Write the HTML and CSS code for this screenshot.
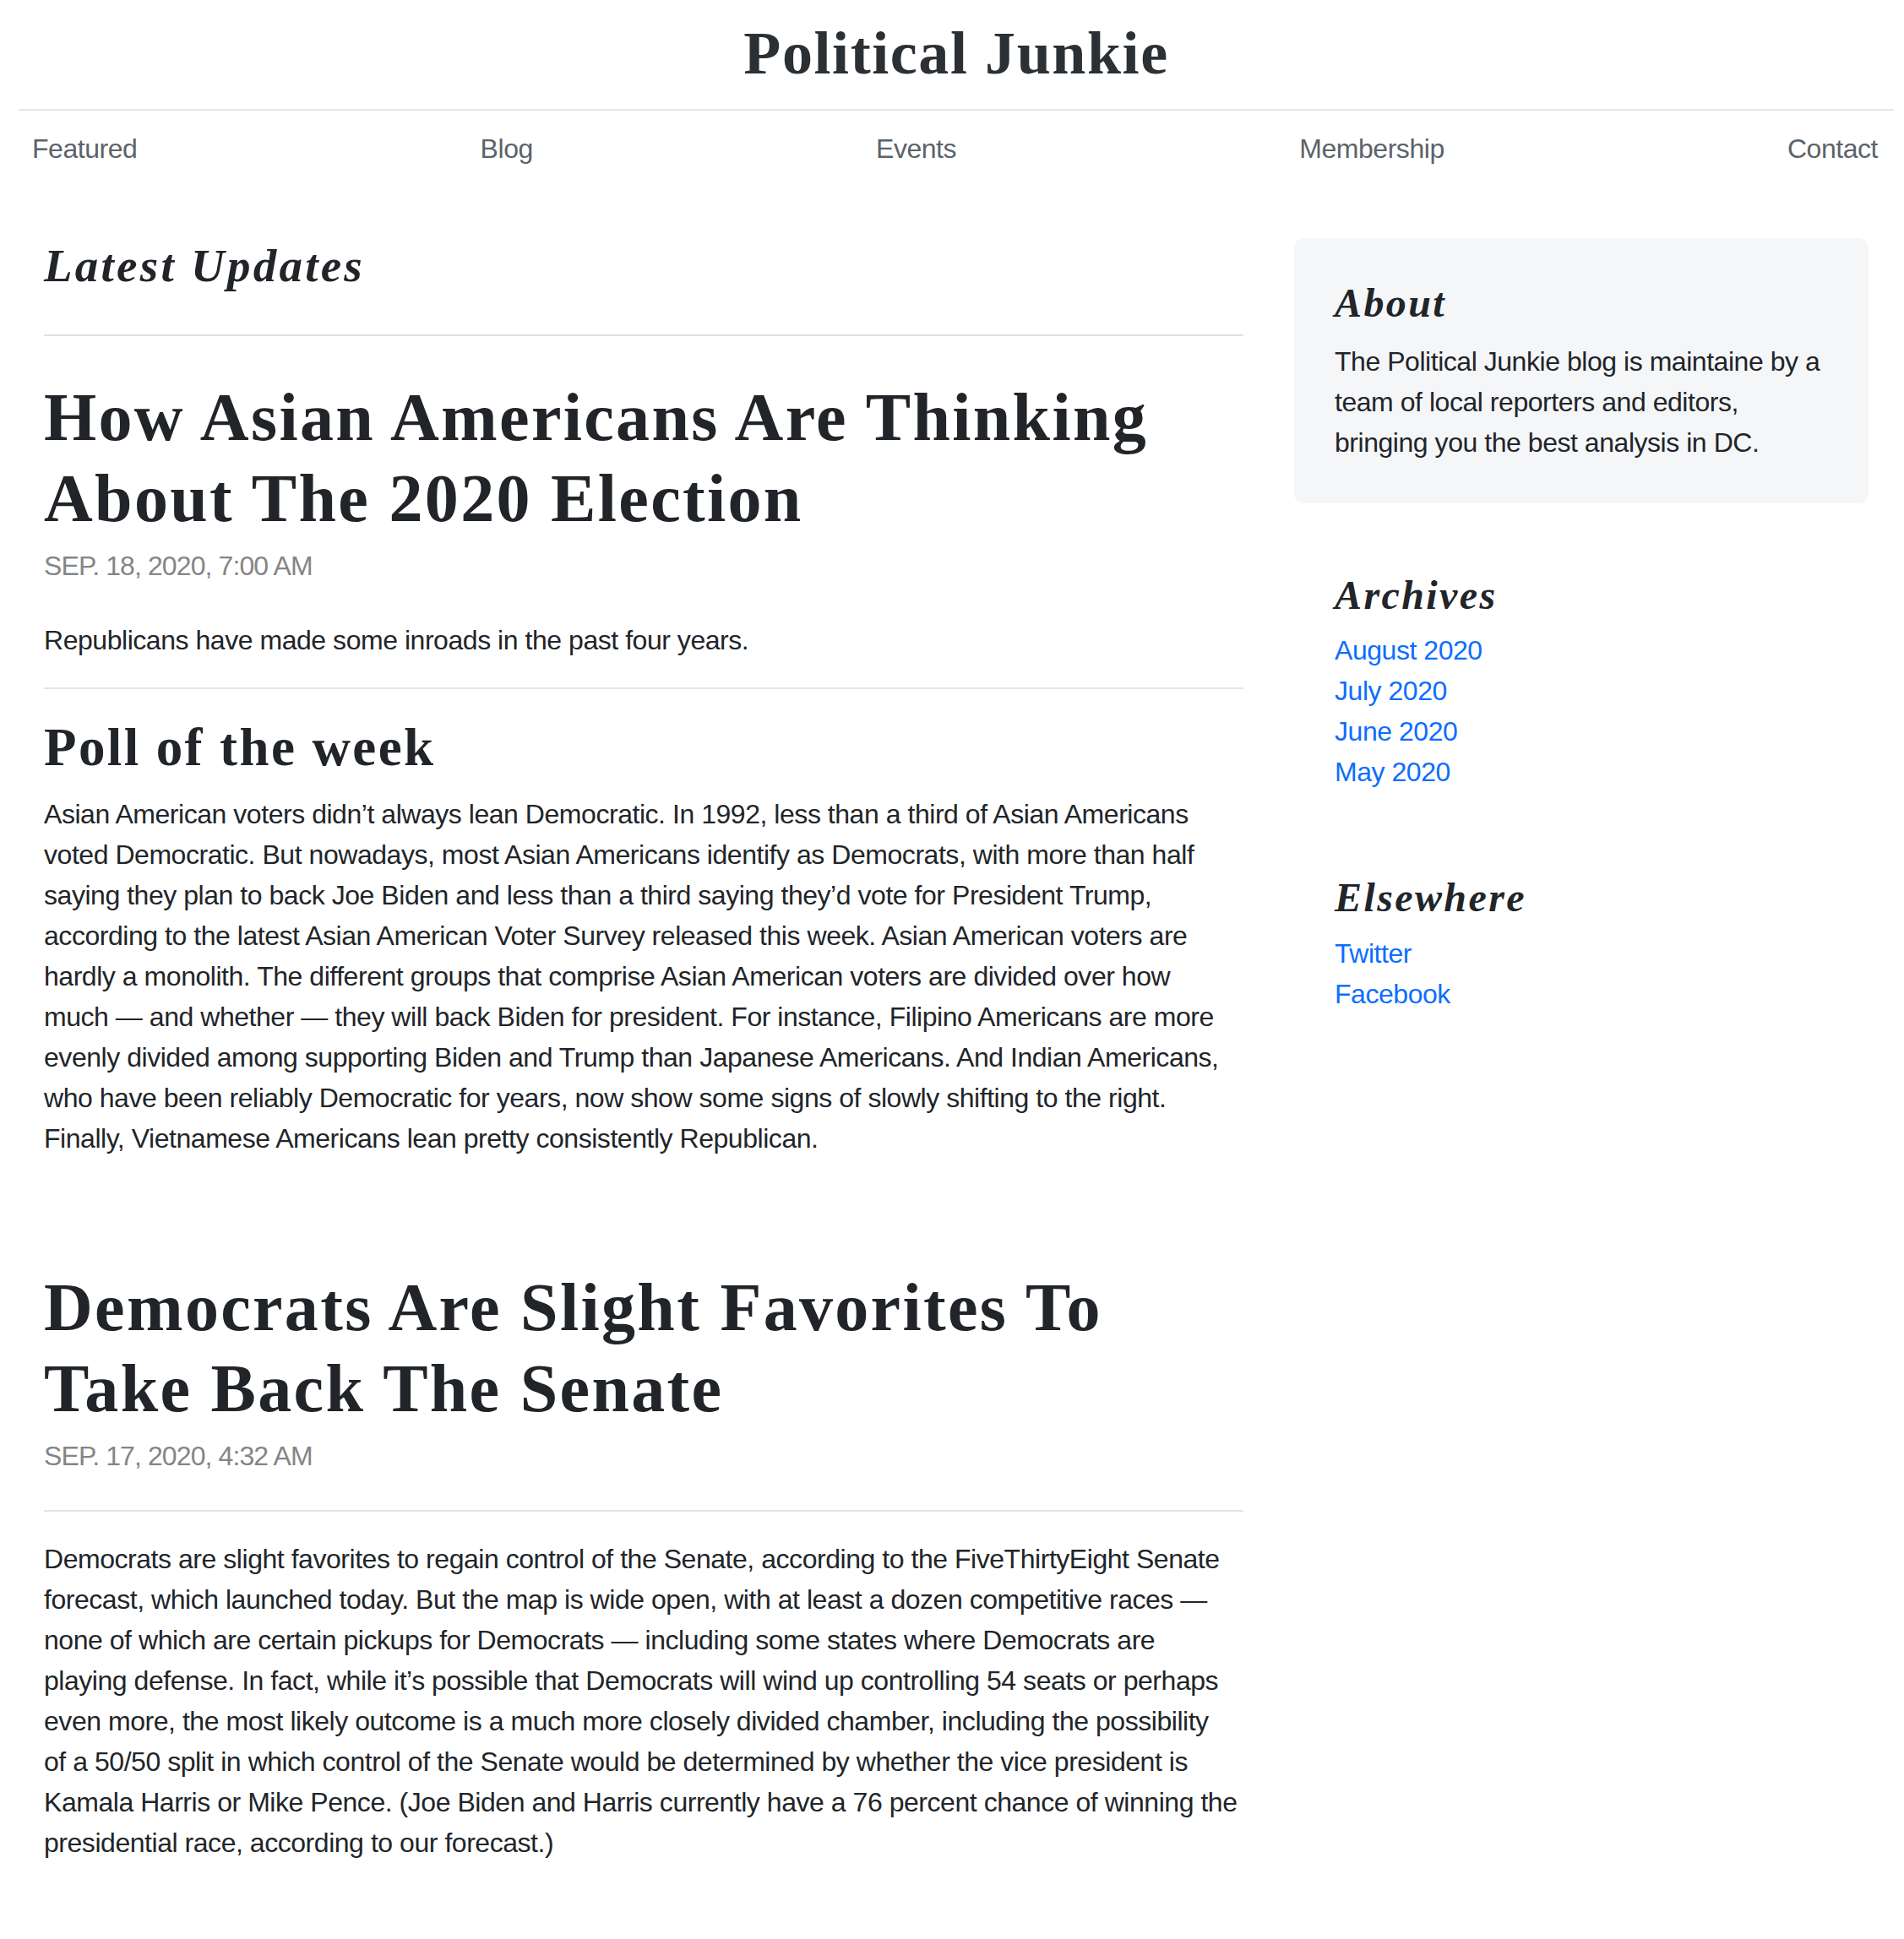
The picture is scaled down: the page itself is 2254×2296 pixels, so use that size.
FILE: index.html
```html
<!DOCTYPE html>
<html lang="en">
<head>
<meta charset="utf-8">
<title>Political Junkie</title>
<link rel="stylesheet" href="styles.css">
</head>
<body>
<div class="page">
  <header class="site-header">
    <h1 class="logo">Political Junkie</h1>
  </header>
  <nav class="nav">
    <a class="nav-link" href="#">Featured</a>
    <a class="nav-link" href="#">Blog</a>
    <a class="nav-link" href="#">Events</a>
    <a class="nav-link" href="#">Membership</a>
    <a class="nav-link" href="#">Contact</a>
  </nav>
  <div class="layout">
    <main class="main-col">
      <h3 class="section-title">Latest Updates</h3>
      <article class="post">
        <h2 class="post-title">How Asian Americans Are Thinking About The 2020 Election</h2>
        <p class="post-meta">Sep. 18, 2020, 7:00 AM</p>
        <p>Republicans have made some inroads in the past four years.</p>
        <hr class="rule">
        <h2 class="post-subtitle">Poll of the week</h2>
        <p>Asian American voters didn’t always lean Democratic. In 1992, less than a third of Asian Americans voted Democratic. But nowadays, most Asian Americans identify as Democrats, with more than half saying they plan to back Joe Biden and less than a third saying they’d vote for President Trump, according to the latest Asian American Voter Survey released this week. Asian American voters are hardly a monolith. The different groups that comprise Asian American voters are divided over how much&nbsp;— and whether — they will back Biden for president. For instance, Filipino Americans are more evenly divided among supporting Biden and Trump than Japanese Americans. And Indian Americans, who have been reliably Democratic for years, now show some signs of slowly shifting to the right. Finally, Vietnamese Americans lean pretty consistently Republican.</p>
      </article>
      <article class="post">
        <h2 class="post-title">Democrats Are Slight Favorites To Take Back The Senate</h2>
        <p class="post-meta">Sep. 17, 2020, 4:32 AM</p>
        <hr class="rule">
        <p>Democrats are slight favorites to regain control of the Senate, according to the FiveThirtyEight Senate forecast, which launched today. But the map is wide open, with at least a dozen competitive races — none of which are certain pickups for Democrats — including some states where Democrats are playing defense. In fact, while it’s possible that Democrats will wind up controlling 54 seats or perhaps even more, the most likely outcome is a much more closely divided chamber, including the possibility of&nbsp;a 50/50 split in which control of the Senate would be determined by whether the vice president is Kamala Harris or Mike Pence. (Joe Biden and Harris currently have a 76 percent chance of winning the presidential race, according to our forecast.)</p>
      </article>
    </main>
    <aside class="side-col">
      <div class="about">
        <h4 class="side-title">About</h4>
        <p class="about-text">The Political Junkie blog is maintaine by a team of local reporters and editors, bringing you the best analysis in DC.</p>
      </div>
      <div class="side-section">
        <h4 class="side-title">Archives</h4>
        <ol class="side-list">
          <li><a href="#">August 2020</a></li>
          <li><a href="#">July 2020</a></li>
          <li><a href="#">June 2020</a></li>
          <li><a href="#">May 2020</a></li>
        </ol>
      </div>
      <div class="side-section">
        <h4 class="side-title">Elsewhere</h4>
        <ol class="side-list">
          <li><a href="#">Twitter</a></li>
          <li><a href="#">Facebook</a></li>
        </ol>
      </div>
    </aside>
  </div>
</div>
</body>
</html>
```
FILE: styles.css
```css
* { box-sizing: border-box; }

body {
  margin: 0;
  background: #ffffff;
  color: #212529;
  font-family: "Liberation Sans", Arial, sans-serif;
  font-size: 32px;
  line-height: 48px;
  letter-spacing: -0.46px;
}

.page {
  padding: 0 12px 0 22px;
}

.site-header {
  padding: 27px 0 30px;
  border-bottom: 2px solid #e5e5e5;
  text-align: center;
}

.logo {
  margin: 0;
  font-family: "Liberation Serif", "Times New Roman", serif;
  font-weight: 700;
  font-size: 72px;
  line-height: 72px;
  letter-spacing: 0.022em;
  color: #2b3035;
}

.nav {
  display: flex;
  justify-content: space-between;
  margin-top: 5px;
  padding-right: 3px;
}

.nav-link {
  padding: 16px;
  color: #5c636a;
  text-decoration: none;
}

.layout {
  display: flex;
  margin-top: 66px;
}

.main-col {
  flex: 0 0 66.6667%;
  padding: 0 30px;
}

.side-col {
  flex: 0 0 33.3333%;
  padding: 0 30px;
}

.section-title,
.side-title {
  font-family: "Liberation Serif", "Times New Roman", serif;
  font-style: italic;
  font-weight: 700;
  color: #212529;
}

.section-title {
  margin: 0 0 48px;
  padding-bottom: 48px;
  border-bottom: 2px solid #dee2e6;
  font-size: 55px;
  line-height: 1.2;
  letter-spacing: 0.059em;
}

.post {
  margin-bottom: 128px;
}

.post p {
  margin: 0 0 32px;
}

.post-title {
  margin: 0 0 8px;
  font-family: "Liberation Serif", "Times New Roman", serif;
  font-weight: 700;
  font-size: 80px;
  line-height: 96px;
  letter-spacing: 0.029em;
  color: #212529;
}

.post .post-meta {
  margin: 0 0 40px;
  color: #858585;
  text-transform: uppercase;
  letter-spacing: -0.9px;
}

.post-subtitle {
  margin: 0 0 16px;
  font-family: "Liberation Serif", "Times New Roman", serif;
  font-weight: 700;
  font-size: 63px;
  line-height: 1.2;
  letter-spacing: 0.038em;
  color: #212529;
}

.rule {
  height: 0;
  margin: 32px 0;
  border: 0;
  border-top: 2px solid #e4e4e4;
}

.about {
  margin-bottom: 32px;
  padding: 48px;
  background: #f5f6f8;
  border-radius: 12px;
}

.side-title {
  margin: 0 0 16px;
  font-size: 48px;
  line-height: 1.2;
  letter-spacing: 0.05em;
}

.side-section .side-title {
  margin-bottom: 13px;
}

.about-text {
  margin: 0;
}

.side-section {
  padding: 48px;
}

.side-list {
  margin: 0;
  padding: 0;
  list-style: none;
}

.side-list a {
  color: #0d6efd;
  text-decoration: none;
}
```
